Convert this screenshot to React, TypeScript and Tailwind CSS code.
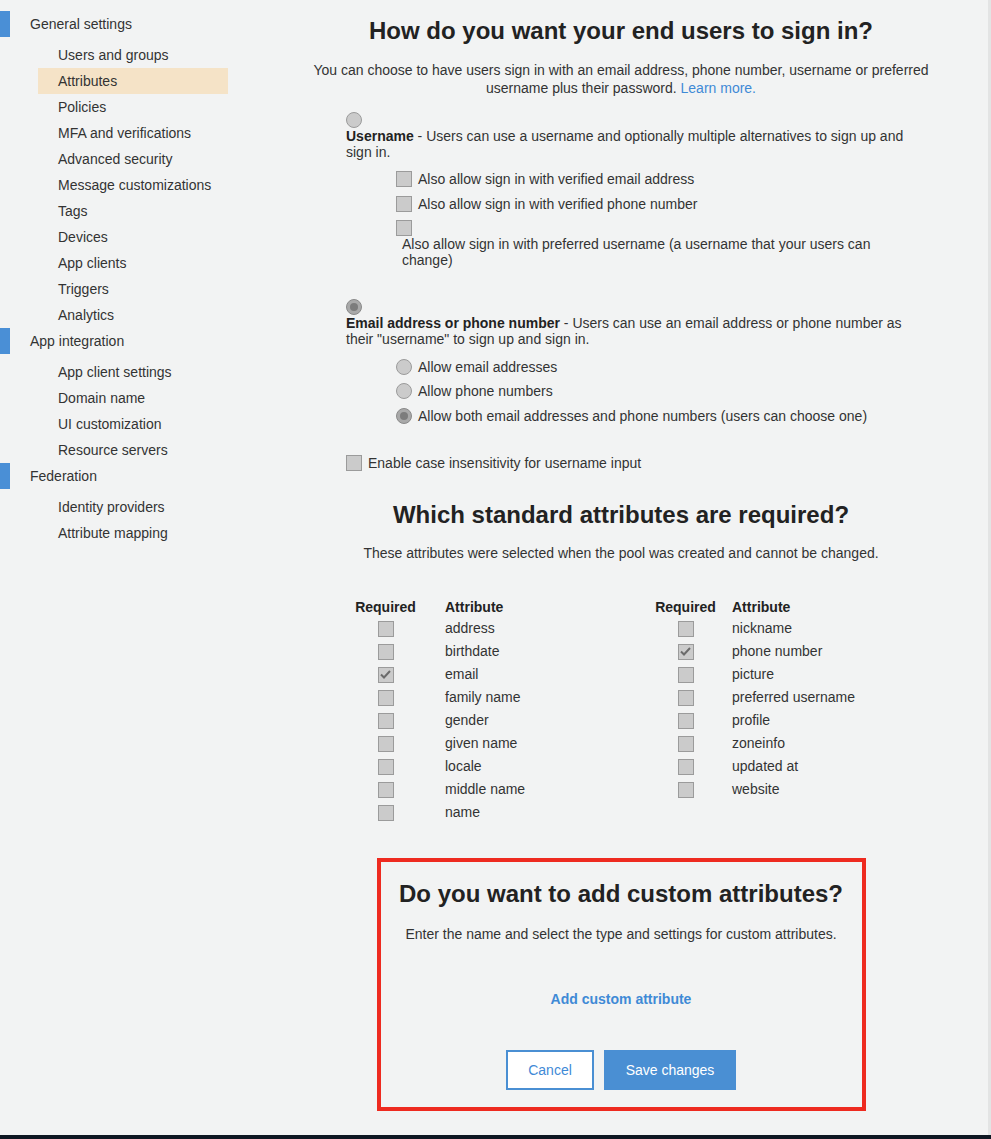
import React from "react";

const navGroups = [
  {
    title: "General settings",
    items: [
      "Users and groups",
      "Attributes",
      "Policies",
      "MFA and verifications",
      "Advanced security",
      "Message customizations",
      "Tags",
      "Devices",
      "App clients",
      "Triggers",
      "Analytics",
    ],
  },
  {
    title: "App integration",
    items: ["App client settings", "Domain name", "UI customization", "Resource servers"],
  },
  {
    title: "Federation",
    items: ["Identity providers", "Attribute mapping"],
  },
];

const leftAttrs = [
  ["address", false],
  ["birthdate", false],
  ["email", true],
  ["family name", false],
  ["gender", false],
  ["given name", false],
  ["locale", false],
  ["middle name", false],
  ["name", false],
] as const;

const rightAttrs = [
  ["nickname", false],
  ["phone number", true],
  ["picture", false],
  ["preferred username", false],
  ["profile", false],
  ["zoneinfo", false],
  ["updated at", false],
  ["website", false],
] as const;

function Box({ checked = false }: { checked?: boolean }) {
  return (
    <span className="w-4 h-4 shrink-0 border border-[#9b9b9b] bg-[#cbcbcb] flex items-center justify-center">
      {checked && (
        <svg width="11" height="9" viewBox="0 0 11 9">
          <path d="M1 4.5 L4 7.5 L10 1" fill="none" stroke="#6b6b6b" strokeWidth="2" />
        </svg>
      )}
    </span>
  );
}

function Radio({ checked = false }: { checked?: boolean }) {
  return (
    <span
      className={
        "w-4 h-4 shrink-0 rounded-full border flex items-center justify-center " +
        (checked ? "border-[#8a8a8a] bg-[#a9a9a9]" : "border-[#9b9b9b] bg-[#cbcbcb]")
      }
    >
      {checked && <span className="w-2 h-2 rounded-full bg-[#7c7c7c]" />}
    </span>
  );
}

function Sidebar() {
  return (
    <div className="w-[254px] shrink-0 pt-[11px]">
      {navGroups.map((g) => (
        <div key={g.title}>
          <div className="flex items-center h-[26px]">
            <span className="w-[10px] h-[26px] bg-[#4a8fd6]" />
            <span className="ml-[20px] text-[14px] text-[#333]">{g.title}</span>
          </div>
          <div className="pt-[5px]">
            {g.items.map((it) => (
              <div key={it} className="h-[26px] flex items-center pl-[38px]">
                <div
                  className={
                    "w-[190px] h-[26px] flex items-center pl-[20px] text-[14px] text-[#333] " +
                    (it === "Attributes" ? "bg-[#f5e3c7]" : "")
                  }
                >
                  {it}
                </div>
              </div>
            ))}
          </div>
        </div>
      ))}
    </div>
  );
}

function AttrTable({
  rows,
  width,
  reqWidth,
}: {
  rows: readonly (readonly [string, boolean])[];
  width: string;
  reqWidth: string;
}) {
  return (
    <div className={width}>
      <div className="flex h-[20px] items-center font-bold text-[#222]">
        <div className={reqWidth}>
          <span className="inline-block w-[61px] text-center">Required</span>
        </div>
        <div>Attribute</div>
      </div>
      {rows.map(([name, checked]) => (
        <div key={name} className="flex h-[23px] items-center">
          <div className={reqWidth}>
            <div className="w-[61px] flex justify-center">
              <Box checked={checked} />
            </div>
          </div>
          <div>{name}</div>
        </div>
      ))}
    </div>
  );
}

export default function App() {
  return (
    <div className="w-[991px] flex flex-col bg-[#f2f3f3] text-[14px] text-[#333]" style={{ fontFamily: '"Liberation Sans", Arial, sans-serif' }}>
      <div className="flex h-[1135px]">
        <Sidebar />
        <div className="flex-1 border-r-[3px] border-[#e3e4e4]">
          <div className="w-[640px] mx-auto pt-[17px]">
            <h1 className="text-[24px] leading-[28px] font-bold text-[#222] text-center">
              How do you want your end users to sign in?
            </h1>
            <p className="mt-[16px] leading-[18px] text-center">
              You can choose to have users sign in with an email address, phone number, username or preferred
              username plus their password. <span className="text-[#3f8ad6]">Learn more.</span>
            </p>

            <div className="ml-[45px] w-[572px]">
              <div className="mt-[15px]">
                <Radio />
              </div>
              <p className="leading-[16px]">
                <span className="font-bold text-[#222]">Username</span> - Users can use a username and optionally
                multiple alternatives to sign up and sign in.
              </p>
              <div className="pl-[50px]">
                <div className="mt-[11px] flex items-center gap-[6px]">
                  <Box />
                  <span className="leading-[16px]">Also allow sign in with verified email address</span>
                </div>
                <div className="mt-[9px] flex items-center gap-[6px]">
                  <Box />
                  <span className="leading-[16px]">Also allow sign in with verified phone number</span>
                </div>
                <div className="mt-[8px]">
                  <Box />
                  <p className="ml-[6px] w-[495px] leading-[16px]">
                    Also allow sign in with preferred username (a username that your users can change)
                  </p>
                </div>
              </div>

              <div className="mt-[31px]">
                <Radio checked />
              </div>
              <p className="leading-[16px]">
                <span className="font-bold text-[#222]">Email address or phone number</span> - Users can use an
                email address or phone number as their "username" to sign up and sign in.
              </p>
              <div className="pl-[50px]">
                <div className="mt-[12px] flex items-center gap-[6px]">
                  <Radio />
                  <span className="leading-[16px]">Allow email addresses</span>
                </div>
                <div className="mt-[8px] flex items-center gap-[6px]">
                  <Radio />
                  <span className="leading-[16px]">Allow phone numbers</span>
                </div>
                <div className="mt-[9px] flex items-center gap-[6px]">
                  <Radio checked />
                  <span className="leading-[16px]">
                    Allow both email addresses and phone numbers (users can choose one)
                  </span>
                </div>
              </div>

              <div className="mt-[31px] flex items-center gap-[6px]">
                <Box />
                <span className="leading-[16px]">Enable case insensitivity for username input</span>
              </div>
            </div>

            <h2 className="mt-[30px] text-[24px] leading-[28px] font-bold text-[#222] text-center">
              Which standard attributes are required?
            </h2>
            <p className="mt-[15px] leading-[18px] text-center">
              These attributes were selected when the pool was created and cannot be changed.
            </p>

            <div className="mt-[35px] ml-[54px] flex">
              <AttrTable rows={leftAttrs} width="w-[300px]" reqWidth="w-[90px]" />
              <AttrTable rows={rightAttrs} width="w-[250px]" reqWidth="w-[77px]" />
            </div>

            <div className="mt-[34px] mx-auto w-[489px] border-[4px] border-[#ee2a1f] pt-[18px] pb-[17px] flex flex-col items-center">
              <h2 className="text-[24px] leading-[28px] font-bold text-[#222] text-center">
                Do you want to add custom attributes?
              </h2>
              <p className="mt-[17px] leading-[18px] text-center">
                Enter the name and select the type and settings for custom attributes.
              </p>
              <a className="mt-[47px] leading-[18px] font-bold text-[#3f8ad6]">Add custom attribute</a>
              <div className="mt-[42px] flex gap-[10px]">
                <button className="w-[88px] h-[40px] bg-white border-2 border-[#4a8fd3] text-[#3f8ad6] text-[14px]">
                  Cancel
                </button>
                <button className="w-[132px] h-[40px] bg-[#4a8fd3] text-white text-[14px]">Save changes</button>
              </div>
            </div>
          </div>
        </div>
      </div>
      <div className="h-[4px] bg-[#0e1722]" />
    </div>
  );
}
